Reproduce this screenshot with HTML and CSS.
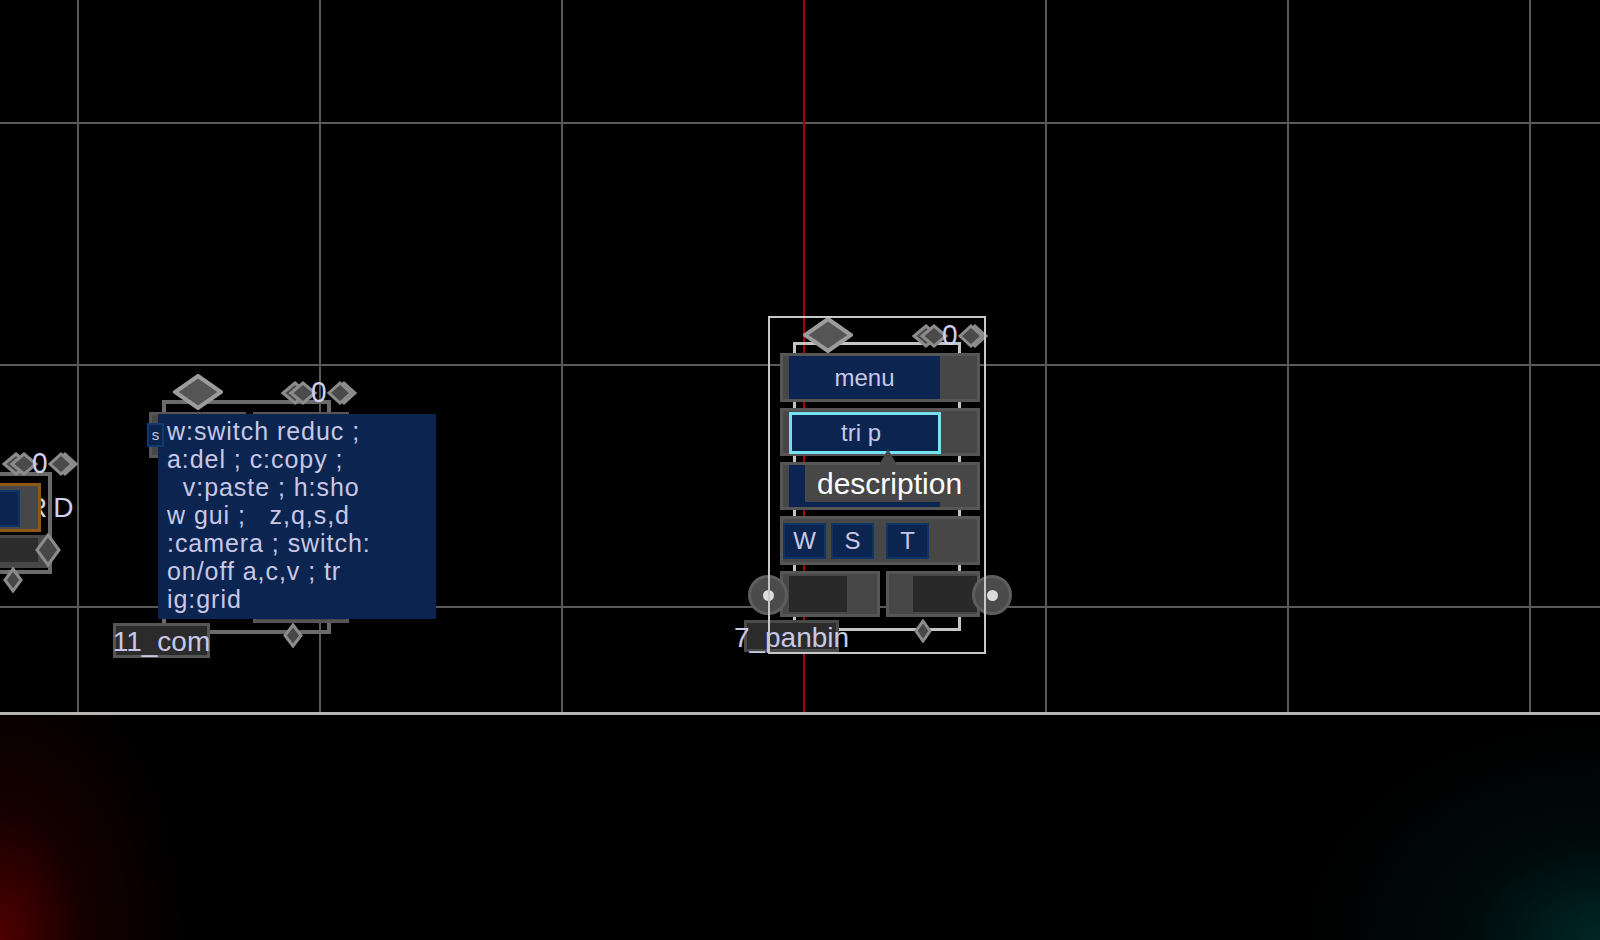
FILE: index.html
```html
<!DOCTYPE html>
<html>
<head>
<meta charset="utf-8">
<title>Node editor</title>
<link rel="stylesheet" href="styles.css">
</head>
<body>
<div class="screen">
  <div class="viewport">

    <!-- partial node at the left edge -->
    <div class="node node-rd">
      <span class="rd-text">RD</span>
      <div class="rd-row rd-row-top">
        <div class="rd-field"><div class="rd-blue"></div></div>
      </div>
      <div class="rd-row rd-row-bottom">
        <div class="rd-dark"></div>
      </div>
      <div class="ports ports-rd">
        <svg class="port-l" viewBox="0 0 34 24" width="34" height="24"><polygon points="13,2 25,12 13,22 1,12"/><polygon points="21,2 33,12 21,22 9,12"/></svg>
        <span class="port-num">0</span>
        <svg class="port-r" viewBox="0 0 28 24" width="28" height="24"><polygon points="16,2 27,12 16,22 5,12"/><polygon points="12,2 23,12 12,22 1,12"/></svg>
      </div>
      <svg class="pin pin-rd-side" viewBox="0 0 26 34" width="26" height="34"><polygon points="13,2 24,17 13,32 2,17"/></svg>
      <svg class="pin pin-rd-bottom" viewBox="0 0 20 26" width="20" height="26"><polygon points="10,2 18,13 10,24 2,13"/></svg>
    </div>

    <!-- comment node -->
    <div class="node node-com">
      <div class="frame frame-dim com-frame"></div>
      <div class="com-box com-box-a"></div>
      <div class="com-box com-box-b"></div>
      <div class="comment">w:switch reduc ;
a:del ; c:copy ;
  v:paste ; h:sho
w gui ;   z,q,s,d
:camera ; switch:
on/off a,c,v ; tr
ig:grid</div>
      <div class="s-tag">s</div>
      <svg class="pin pin-top com-top" viewBox="0 0 50 36" width="50" height="36"><polygon points="25,2 48,18 25,34 2,18"/></svg>
      <div class="ports ports-com">
        <svg class="port-l" viewBox="0 0 34 24" width="34" height="24"><polygon points="13,2 25,12 13,22 1,12"/><polygon points="21,2 33,12 21,22 9,12"/></svg>
        <span class="port-num">0</span>
        <svg class="port-r" viewBox="0 0 28 24" width="28" height="24"><polygon points="16,2 27,12 16,22 5,12"/><polygon points="12,2 23,12 12,22 1,12"/></svg>
      </div>
      <svg class="pin pin-bottom com-bottom" viewBox="0 0 20 25" width="20" height="25"><polygon points="10,2 18,12.5 10,23 2,12.5"/></svg>
      <div class="label com-label">11_com</div>
    </div>

    <!-- selected node -->
    <div class="node node-panbin">
      <div class="frame frame-sel pan-frame"></div>
      <div class="row"><div class="field">menu</div></div>
      <div class="row"><div class="field field-active">tri p</div></div>
      <div class="row"><div class="field"></div></div>
      <div class="row row-buttons">
        <div class="btn">W</div>
        <div class="btn">S</div>
        <div class="btn btn-t">T</div>
      </div>
      <div class="row-split">
        <div class="half half-left"><div class="slot"></div></div>
        <div class="half half-right"><div class="slot"></div></div>
      </div>
      <svg class="pin pin-top pan-top" viewBox="0 0 50 36" width="50" height="36"><polygon points="25,2 48,18 25,34 2,18"/></svg>
      <div class="ports ports-pan">
        <svg class="port-l" viewBox="0 0 34 24" width="34" height="24"><polygon points="13,2 25,12 13,22 1,12"/><polygon points="21,2 33,12 21,22 9,12"/></svg>
        <span class="port-num">0</span>
        <svg class="port-r" viewBox="0 0 28 24" width="28" height="24"><polygon points="16,2 27,12 16,22 5,12"/><polygon points="12,2 23,12 12,22 1,12"/></svg>
      </div>
      <div class="knob knob-left"><span class="knob-dot"></span></div>
      <div class="knob knob-right"><span class="knob-dot"></span></div>
      <svg class="pin pin-bottom pan-bottom" viewBox="0 0 18 24" width="18" height="24"><polygon points="9,2 16,12 9,22 2,12"/></svg>
      <div class="label pan-label">7_panbin</div>
      <div class="tooltip">description</div>
      <div class="selection"></div>
    </div>

  </div>
  <div class="divider"></div>
  <div class="bottom-panel"></div>
</div>
</body>
</html>
```

FILE: styles.css
```css
* { box-sizing: border-box; }

html, body {
  margin: 0;
  padding: 0;
  background: #000;
  overflow: hidden;
}

body {
  font-family: "Liberation Sans", Arial, sans-serif;
  color: #c8c8e6;
}

.screen {
  width: 1600px;
  height: 940px;
  display: flex;
  flex-direction: column;
}

.viewport {
  position: relative;
  height: 712px;
  flex: none;
  overflow: hidden;
  background-color: #000;
  background-image:
    linear-gradient(to right, transparent 803px, #a80000 803px, #a80000 805px, transparent 805px),
    linear-gradient(to right, #595959 2px, transparent 2px),
    linear-gradient(to bottom, #595959 2px, transparent 2px);
  background-size: 100% 100%, 242px 242px, 242px 242px;
  background-position: 0 0, 77px 0, 0 122px;
  background-repeat: no-repeat, repeat, repeat;
}

.divider {
  height: 3px;
  flex: none;
  background: #b4b4b4;
}

.bottom-panel {
  flex: 1;
  background:
    radial-gradient(ellipse 190px 300px at 0% 100%, rgba(78, 0, 0, 1) 0%, rgba(36, 0, 0, 0.55) 45%, rgba(0, 0, 0, 0) 100%),
    radial-gradient(ellipse 300px 220px at 100% 100%, rgba(0, 38, 38, 1) 0%, rgba(0, 20, 20, 0.5) 45%, rgba(0, 0, 0, 0) 100%),
    #000;
}

/* ---------- generic node parts ---------- */

.node {
  position: absolute;
  isolation: isolate;
}

.frame {
  position: absolute;
  z-index: -1;
}

.frame-dim { border: 4px solid #6b6b6b; }
.frame-sel { border: 3px solid #c4c4c4; }

.pin {
  position: absolute;
  z-index: 3;
}

.pin polygon {
  fill: #474747;
  stroke: #8c8c8c;
  stroke-width: 3;
  stroke-linejoin: miter;
}

.pin-top polygon {
  fill: #555;
  stroke: #9c9c9c;
  stroke-width: 4;
}

.ports {
  position: absolute;
  z-index: 3;
  display: flex;
  align-items: center;
  height: 24px;
}

.ports svg { display: block; flex: none; overflow: visible; }

.ports polygon {
  fill: #4a4a4a;
  stroke: #8c8c8c;
  stroke-width: 3;
}

.port-num {
  width: 15px;
  margin-left: -5px;
  margin-right: 2px;
  text-align: center;
  font-size: 28px;
  line-height: 24px;
  color: #d0d0ee;
  position: relative;
  z-index: 1;
  top: -1px;
  transform: scaleY(1.08);
}

.label {
  position: absolute;
  z-index: 3;
  background: #2b2b2b;
  border: 3px solid #505050;
  display: flex;
  align-items: center;
  justify-content: center;
  font-size: 28px;
  white-space: nowrap;
  overflow: visible;
  color: #c8c8e6;
}

/* ---------- RD partial node ---------- */

.node-rd {
  left: -60px;
  top: 472px;
  width: 112px;
  height: 102px;
  border: 4px solid #6b6b6b;
  padding-top: 7px;
  display: flex;
  flex-direction: column;
  align-items: flex-start;
  gap: 3px;
}

.rd-text {
  position: absolute;
  left: 83px;
  top: 18px;
  font-size: 28px;
  line-height: 28px;
  letter-spacing: 6px;
  color: #d0d0ee;
  z-index: 0;
}

.rd-row {
  position: relative;
  z-index: 1;
  background: #474747;
}

.rd-row-top { height: 49px; }

.rd-field {
  width: 97px;
  height: 49px;
  border: 3px solid #8d5a16;
  padding: 4px 0 2px 4px;
  background: #474747;
}

.rd-blue {
  width: 69px;
  height: 100%;
  background: #0b2550;
  border: 2px solid #0f3466;
}

.rd-row-bottom { height: 33px; width: 104px; padding-top: 3px; }

.rd-dark {
  width: 94px;
  height: 24px;
  background: #2c2c2c;
}

.ports-rd { left: 59px; top: -24px; }
.pin-rd-side { left: 91px; top: 57px; }
.pin-rd-bottom { left: 59px; top: 91px; }

/* ---------- comment node ---------- */

.node-com {
  left: 149px;
  top: 412px;
  display: flex;
  align-items: flex-start;
  gap: 7px;
}

.com-frame {
  left: 13px;
  top: -12px;
  width: 169px;
  height: 234px;
}

.com-box {
  background: #474747;
  border: 3px solid #565656;
}

.com-box-a { width: 97px; height: 46px; }
.com-box-b { width: 96px; height: 211px; }

.comment {
  position: absolute;
  z-index: 2;
  left: 9px;
  top: 2px;
  width: 278px;
  height: 205px;
  background: #0b2550;
  padding: 3px 0 0 9px;
  font-size: 25px;
  line-height: 28px;
  letter-spacing: 0.95px;
  white-space: pre;
  color: #c8c8e6;
}

.s-tag {
  position: absolute;
  z-index: 3;
  left: -2px;
  top: 11px;
  width: 17px;
  height: 24px;
  background: #0b2550;
  border: 2px solid #123a70;
  font-size: 15px;
  line-height: 19px;
  text-align: center;
  color: #c8c8e6;
}

.com-top { left: 24px; top: -38px; }
.ports-com { left: 133px; top: -31px; }
.com-bottom { left: 134px; top: 211px; }
.com-label { left: -36px; top: 211px; width: 97px; height: 35px; border-color: #555; padding-top: 2px; }

/* ---------- selected node ---------- */

.node-panbin {
  left: 780px;
  top: 353px;
  width: 200px;
  display: flex;
  flex-direction: column;
  gap: 6px;
}

.pan-frame {
  left: 13px;
  top: -11px;
  width: 168px;
  height: 289px;
}

.row {
  height: 49px;
  background: #474747;
  border: 3px solid #565656;
  padding-left: 6px;
  display: flex;
}

.row:nth-of-type(3), .row:nth-of-type(4) { height: 48px; }

.field {
  width: 151px;
  height: 100%;
  background: #0b2550;
  display: flex;
  align-items: center;
  justify-content: center;
  font-size: 24px;
  color: #c8c8e6;
}

.field-active {
  width: 152px;
  border: 3px solid #74e2f0;
  margin-top: 1px;
  height: 42px;
  padding-right: 8px;
}

.row-buttons {
  padding-left: 0;
  align-items: center;
  gap: 5px;
}

.btn {
  width: 43px;
  height: 36px;
  background: #0b2550;
  border: 2px solid #0f3466;
  display: flex;
  align-items: center;
  justify-content: center;
  font-size: 24px;
  color: #c8c8e6;
}

.btn-t { margin-left: 7px; }

.row-split {
  display: flex;
  gap: 6px;
  height: 46px;
}

.half {
  flex: 1;
  background: #474747;
  border: 3px solid #565656;
  display: flex;
  align-items: center;
}

.half-left { padding-left: 6px; }
.half-right { justify-content: flex-end; }

.half-left .slot { width: 58px; height: 36px; background: #292929; }
.half-right .slot { width: 64px; height: 36px; background: #292929; }

.pan-top { left: 23px; top: -36px; }
.ports-pan { left: 133px; top: -29px; }

.knob {
  position: absolute;
  z-index: 3;
  top: 222px;
  width: 40px;
  height: 40px;
  border-radius: 50%;
  background: #4b4b4b;
  border: 3px solid #5e5e5e;
  display: flex;
  align-items: center;
  justify-content: center;
}

.knob-left { left: -32px; }
.knob-right { left: 192px; }

.knob-dot {
  width: 11px;
  height: 11px;
  border-radius: 50%;
  background: #dcdcdc;
}

.pan-bottom { left: 134px; top: 266px; }
.pan-label { left: -36px; top: 267px; width: 95px; height: 32px; border-color: #4a4a4a; padding-top: 4px; }

.tooltip {
  position: absolute;
  z-index: 4;
  left: 25px;
  top: 112px;
  width: 166px;
  height: 37px;
  background: #474747;
  color: #ffffff;
  font-size: 30px;
  line-height: 37px;
  padding-left: 12px;
  white-space: nowrap;
}

.tooltip::before {
  content: "";
  position: absolute;
  left: 74px;
  top: -16px;
  border-left: 9px solid transparent;
  border-right: 9px solid transparent;
  border-bottom: 16px solid #474747;
}

.selection {
  position: absolute;
  z-index: 5;
  left: -12px;
  top: -37px;
  width: 218px;
  height: 338px;
  border: 2px solid #c8c8c8;
  pointer-events: none;
}
```
